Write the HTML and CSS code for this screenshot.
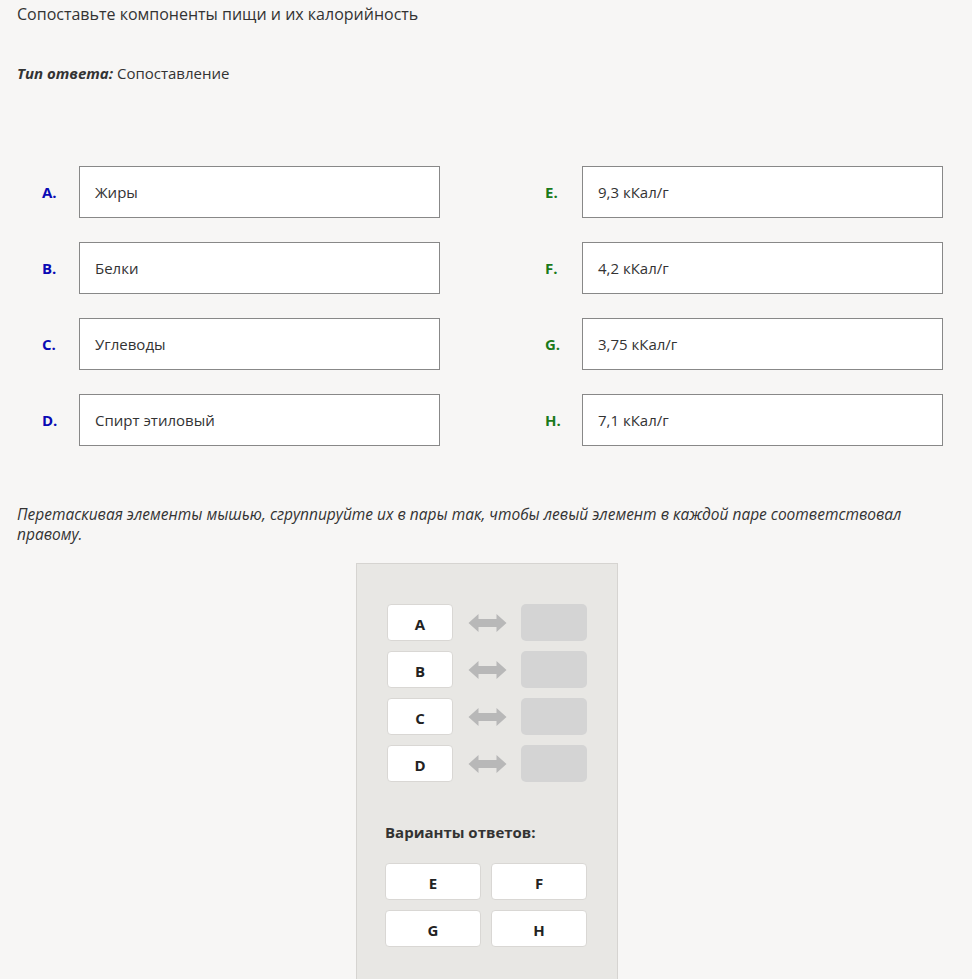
FILE: index.html
```html
<!DOCTYPE html>
<html lang="ru">
<head>
    <meta charset="UTF-8">
    <meta name="viewport" content="width=device-width, initial-scale=1.0">
    <title>Сопоставление</title>
    <link rel="stylesheet" href="styles.css">
</head>
<body>
    <div class="question">
        <p class="question-text">Сопоставьте компоненты пищи и их калорийность</p>
        <p class="answer-type"><em>Тип ответа:</em> Сопоставление</p>

        <div class="pairs">
            <div class="pair-item"><span class="mark left">A.</span><div class="item-box">Жиры</div></div>
            <div class="pair-item"><span class="mark right">E.</span><div class="item-box">9,3 кКал/г</div></div>
            <div class="pair-item"><span class="mark left">B.</span><div class="item-box">Белки</div></div>
            <div class="pair-item"><span class="mark right">F.</span><div class="item-box">4,2 кКал/г</div></div>
            <div class="pair-item"><span class="mark left">C.</span><div class="item-box">Углеводы</div></div>
            <div class="pair-item"><span class="mark right">G.</span><div class="item-box">3,75 кКал/г</div></div>
            <div class="pair-item"><span class="mark left">D.</span><div class="item-box">Спирт этиловый</div></div>
            <div class="pair-item"><span class="mark right">H.</span><div class="item-box">7,1 кКал/г</div></div>
        </div>

        <p class="hint">Перетаскивая элементы мышью, сгруппируйте их в пары так, чтобы левый элемент в каждой паре соответствовал правому.</p>

        <div class="match-panel">
            <div class="match-rows">
                <div class="match-row">
                    <div class="cell">A</div>
                    <svg class="arrow" viewBox="0 0 40 22"><path d="M1 11 L11 2 L11 7 L29 7 L29 2 L39 11 L29 20 L29 15 L11 15 L11 20 Z"/></svg>
                    <div class="drop"></div>
                </div>
                <div class="match-row">
                    <div class="cell">B</div>
                    <svg class="arrow" viewBox="0 0 40 22"><path d="M1 11 L11 2 L11 7 L29 7 L29 2 L39 11 L29 20 L29 15 L11 15 L11 20 Z"/></svg>
                    <div class="drop"></div>
                </div>
                <div class="match-row">
                    <div class="cell">C</div>
                    <svg class="arrow" viewBox="0 0 40 22"><path d="M1 11 L11 2 L11 7 L29 7 L29 2 L39 11 L29 20 L29 15 L11 15 L11 20 Z"/></svg>
                    <div class="drop"></div>
                </div>
                <div class="match-row">
                    <div class="cell">D</div>
                    <svg class="arrow" viewBox="0 0 40 22"><path d="M1 11 L11 2 L11 7 L29 7 L29 2 L39 11 L29 20 L29 15 L11 15 L11 20 Z"/></svg>
                    <div class="drop"></div>
                </div>
            </div>

            <div class="variants-title">Варианты ответов:</div>
            <div class="variants">
                <div class="cell">E</div>
                <div class="cell">F</div>
                <div class="cell">G</div>
                <div class="cell">H</div>
            </div>
        </div>
    </div>
</body>
</html>
```

FILE: styles.css
```css
body {
    margin: 0;
    padding: 0 17px;
    background-color: #f7f6f5;
    color: #333;
    font-family: "Open Sans", "Noto Sans", sans-serif;
    font-size: 15px;
}
.question-text {
    margin: 0;
    font-size: 16px;
    line-height: 28px;
}
.answer-type {
    margin: 34px 0 0;
    line-height: 22px;
}
.answer-type em {
    font-weight: bold;
}
.pairs {
    display: grid;
    grid-template-columns: 398px 398px;
    column-gap: 105px;
    row-gap: 24px;
    margin: 82px 0 0 25px;
}
.pair-item {
    display: flex;
    align-items: center;
}
.mark {
    width: 37px;
    flex-shrink: 0;
    font-weight: bold;
    font-size: 15px;
}
.mark.left {
    color: #0a0ab4;
}
.mark.right {
    color: #1a7a1a;
}
.item-box {
    flex: 1;
    height: 50px;
    display: flex;
    align-items: center;
    padding: 0 15px;
    background-color: #fff;
    border: 1px solid #888;
}
.hint {
    margin: 58px 0 0;
    font-style: italic;
    font-size: 15.5px;
    line-height: 20px;
}
.match-panel {
    box-sizing: border-box;
    width: 262px;
    min-height: 420px;
    margin: 19px 0 0 calc(50% - 130px);
    padding: 40px 28px;
    background-color: #e8e7e4;
    border: 1px solid #d6d4d1;
}
.match-rows {
    display: flex;
    flex-direction: column;
    gap: 10px;
    padding: 0 2px;
}
.match-row {
    display: grid;
    grid-template-columns: 66px 68px 66px;
    align-items: center;
}
.cell {
    box-sizing: border-box;
    height: 37px;
    display: flex;
    align-items: center;
    justify-content: center;
    padding-top: 2px;
    background-color: #fff;
    border: 1px solid #d9d7d4;
    border-radius: 4px;
    font-weight: bold;
    font-size: 15px;
    color: #222;
}
.arrow {
    width: 41px;
    height: 22px;
    justify-self: center;
    fill: #b8b8b8;
}
.drop {
    height: 37px;
    background-color: #d4d4d4;
    border-radius: 5px;
}
.variants-title {
    margin-top: 40px;
    font-weight: bold;
    line-height: 20px;
}
.variants {
    display: grid;
    grid-template-columns: 96px 96px;
    gap: 10px;
    margin-top: 21px;
}
```
